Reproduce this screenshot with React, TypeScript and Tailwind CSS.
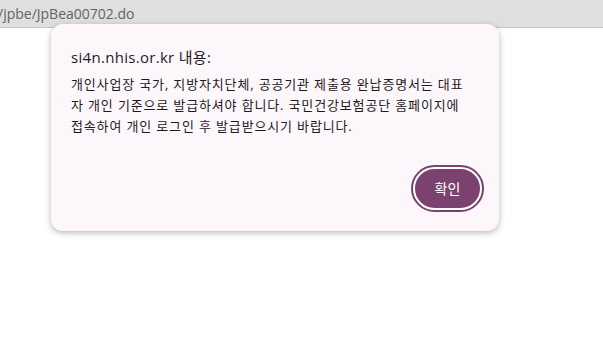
const font = { fontFamily: '"Open Sans", "Noto Sans CJK KR", sans-serif' };

export default function App() {
  return (
    <div className="relative h-[348px] w-[603px] overflow-hidden bg-white" style={font}>
      <div className="flex h-[28px] items-center border-b border-[#c4c4c4] bg-[#dfdfdf]">
        <span className="-ml-[2px] text-[14px] text-[#5f6368]">/jpbe/JpBea00702.do</span>
      </div>

      <div className="absolute left-[51px] top-[24px] w-[448px] rounded-[12px] bg-[#fdf7fc] px-5 pb-[21px] pt-[21px] shadow-[0_2px_6px_rgba(0,0,0,0.28)]">
        <h2 className="text-[15px] leading-[24px] tracking-[0.3px] text-[#1f1a1e]">si4n.nhis.or.kr 내용:</h2>
        <div className="mt-[5px] whitespace-nowrap text-[13px] leading-[21px] tracking-[0.85px] text-[#1f1a1e]">
          <p>개인사업장 국가, 지방자치단체, 공공기관 제출용 완납증명서는 대표</p>
          <p>자 개인 기준으로 발급하셔야 합니다. 국민건강보험공단 홈페이지에</p>
          <p>접속하여 개인 로그인 후 발급받으시기 바랍니다.</p>
        </div>
        <div className="mt-[30px] flex justify-end">
          <button className="-mr-[3px] flex h-[43px] w-[69px] items-center justify-center rounded-full border-2 border-white bg-[#7b4270] text-[14px] text-white outline-2 outline-[#7b4270]">
            확인
          </button>
        </div>
      </div>
    </div>
  );
}
